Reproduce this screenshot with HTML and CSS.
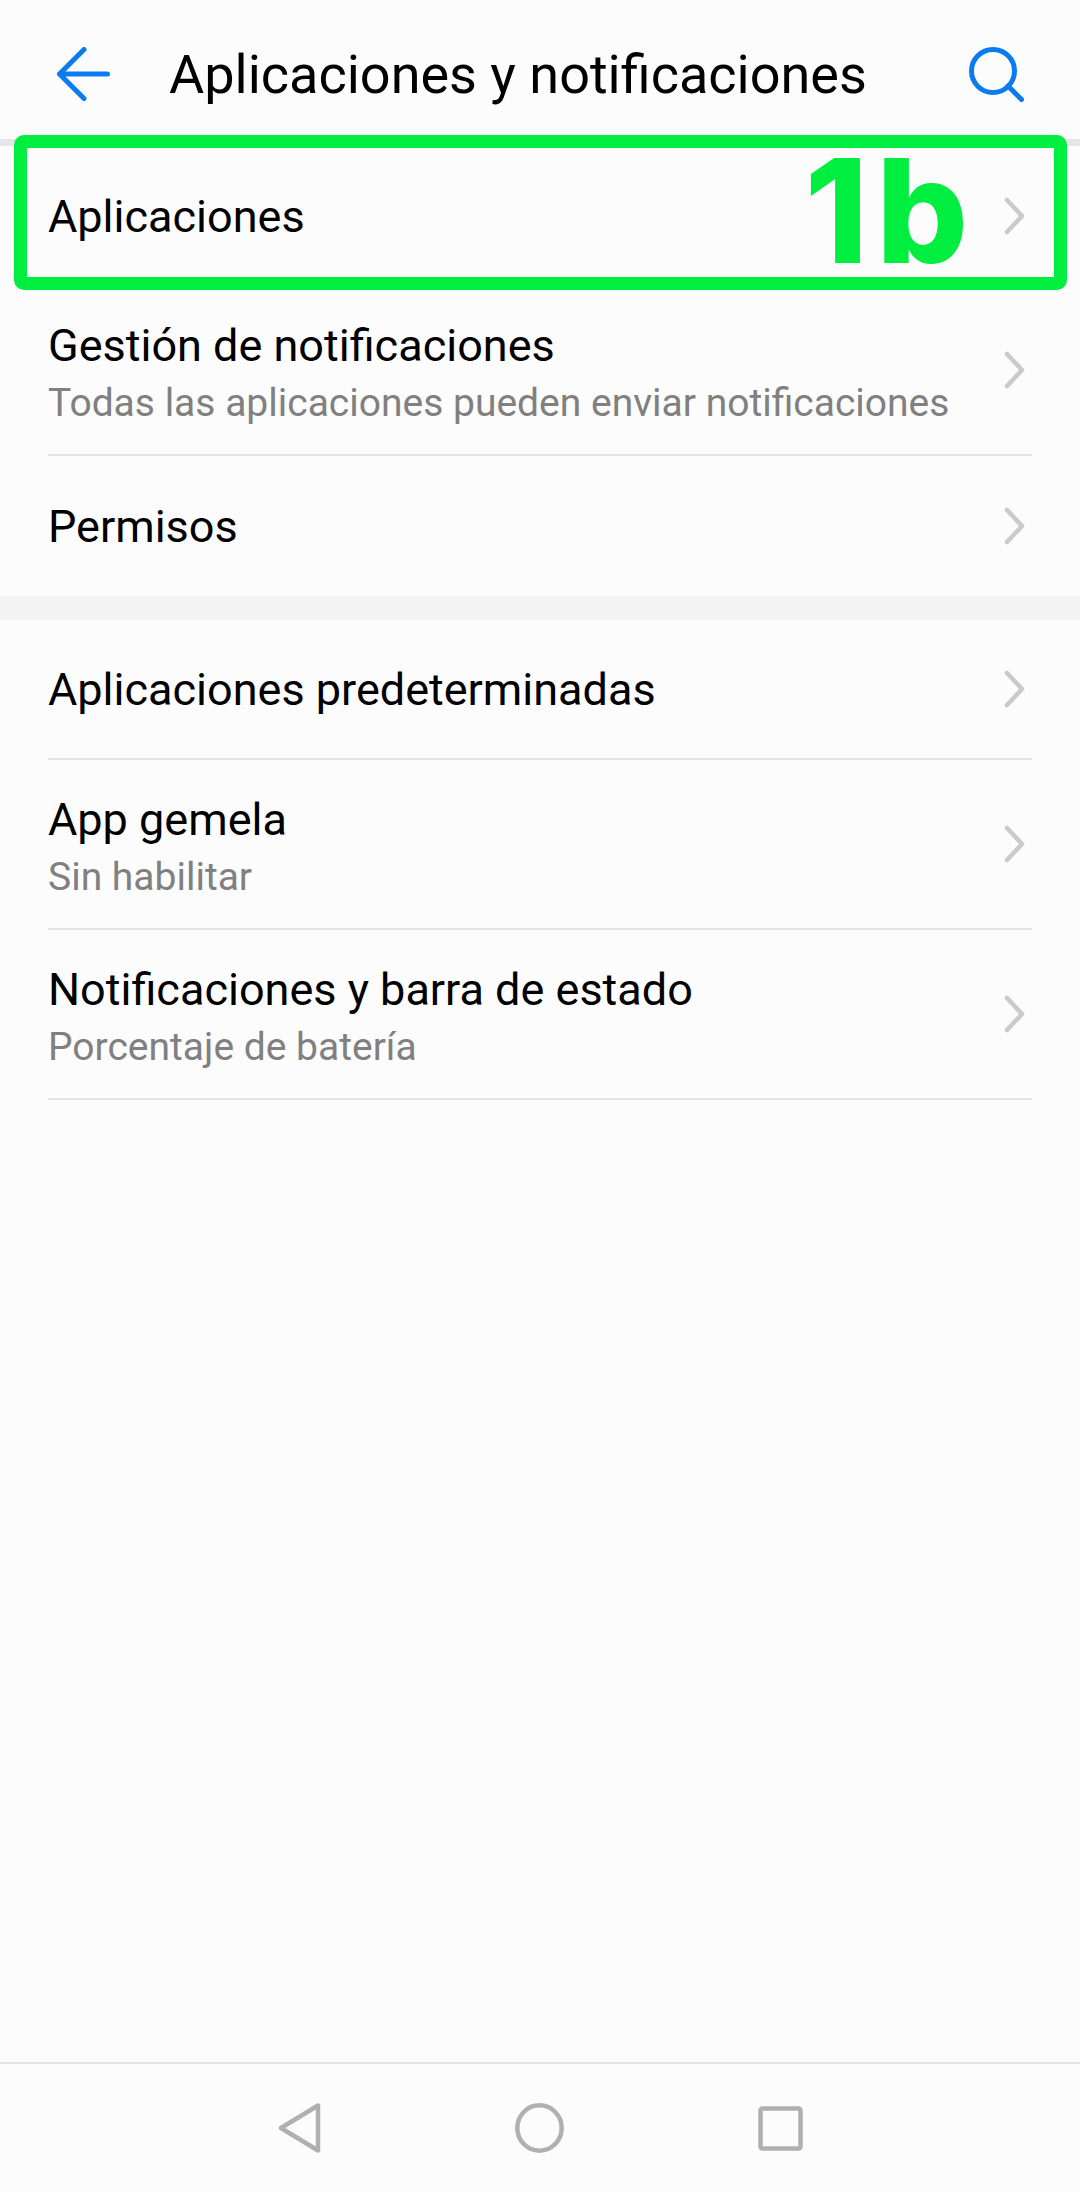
FILE: index.html
```html
<!DOCTYPE html>
<html lang="es">
<head>
  <meta charset="UTF-8">
  <title>Aplicaciones y notificaciones</title>
  <link rel="stylesheet" href="styles.css">
</head>
<body>

  <header class="topbar">
    <svg class="back-icon" width="53" height="54" viewBox="0 0 53 54">
      <path d="M27 2.5 L2.5 27 L27 51.5 M2.5 27 H50.5" />
    </svg>
    <h1>Aplicaciones y notificaciones</h1>
    <svg class="search-icon" width="55" height="55" viewBox="0 0 55 55">
      <circle cx="24" cy="24" r="21.5" />
      <path d="M39 39 L52.5 52.5" />
    </svg>
  </header>

  <main>
    <section class="group">
      <div class="row row-plain">
        <div class="row-text"><span class="row-title">Aplicaciones</span></div>
        <svg class="chevron" viewBox="0 0 22 38"><path d="M4 3 L19 19 L4 35" /></svg>
      </div>
      <div class="row row-double row-lined">
        <div class="row-text">
          <span class="row-title">Gestión de notificaciones</span>
          <span class="row-sub">Todas las aplicaciones pueden enviar notificaciones</span>
        </div>
        <svg class="chevron" viewBox="0 0 22 38"><path d="M4 3 L19 19 L4 35" /></svg>
      </div>
      <div class="row row-plain">
        <div class="row-text"><span class="row-title">Permisos</span></div>
        <svg class="chevron" viewBox="0 0 22 38"><path d="M4 3 L19 19 L4 35" /></svg>
      </div>
    </section>

    <div class="group-gap"></div>

    <section class="group">
      <div class="row row-plain row-lined">
        <div class="row-text"><span class="row-title">Aplicaciones predeterminadas</span></div>
        <svg class="chevron" viewBox="0 0 22 38"><path d="M4 3 L19 19 L4 35" /></svg>
      </div>
      <div class="row row-double row-lined">
        <div class="row-text">
          <span class="row-title">App gemela</span>
          <span class="row-sub">Sin habilitar</span>
        </div>
        <svg class="chevron" viewBox="0 0 22 38"><path d="M4 3 L19 19 L4 35" /></svg>
      </div>
      <div class="row row-double row-lined">
        <div class="row-text">
          <span class="row-title">Notificaciones y barra de estado</span>
          <span class="row-sub">Porcentaje de batería</span>
        </div>
        <svg class="chevron" viewBox="0 0 22 38"><path d="M4 3 L19 19 L4 35" /></svg>
      </div>
    </section>
  </main>

  <nav class="navbar">
    <svg class="nav-icon" width="43" height="50" viewBox="0 0 43 50">
      <path d="M3 25 L40 2.5 V47.5 Z" />
    </svg>
    <svg class="nav-icon" width="49" height="50" viewBox="0 0 49 50">
      <ellipse cx="24.5" cy="25" rx="22.2" ry="22.7" />
    </svg>
    <svg class="nav-icon" width="45" height="45" viewBox="0 0 45 45">
      <rect x="2.5" y="2.5" width="40" height="40" rx="2" />
    </svg>
  </nav>

  <!-- annotation drawn over the screenshot -->
  <div class="callout"></div>
  <span class="callout-label">1b</span>

</body>
</html>
```

FILE: styles.css
```css
html, body {
  margin: 0;
  height: 100%;
}

body {
  position: relative;
  display: flex;
  flex-direction: column;
  font-family: Roboto, sans-serif;
  background-color: #fcfcfc;
  color: #000;
}

.topbar {
  display: flex;
  align-items: center;
  height: 130px;
  padding: 9px 56px 0 57px;
  border-bottom: 7px solid #e6e6e6;
  flex-shrink: 0;
}

.topbar h1 {
  flex: 1;
  margin: 0 0 0 59px;
  font-size: 54px;
  font-weight: 400;
}

.back-icon path,
.search-icon circle,
.search-icon path {
  fill: none;
  stroke: #0a7cf0;
  stroke-width: 5px;
  stroke-linecap: round;
  stroke-linejoin: round;
}

main {
  flex: 1;
}

.row {
  display: flex;
  align-items: center;
  justify-content: space-between;
  margin: 0 48px;
  box-sizing: border-box;
}

.row-plain {
  height: 140px;
}

.row-double {
  height: 170px;
}

.row-double .row-text {
  padding-top: 8px;
}

.row-lined {
  border-bottom: 2px solid #e4e4e4;
}

.row-text {
  display: flex;
  flex-direction: column;
}

.row-title {
  font-size: 45px;
  line-height: 57px;
}

.row-sub {
  font-size: 39px;
  line-height: 58px;
  color: #808080;
}

.chevron {
  width: 22px;
  height: 38px;
  margin-right: 7px;
}

.chevron path {
  fill: none;
  stroke: #cacaca;
  stroke-width: 4.5px;
  stroke-linecap: round;
  stroke-linejoin: round;
}

.group-gap {
  height: 24px;
  background-color: #f4f4f4;
}

.navbar {
  display: flex;
  align-items: center;
  justify-content: center;
  gap: 194px;
  height: 128px;
  border-top: 2px solid #e4e4e4;
  flex-shrink: 0;
}

.nav-icon ellipse,
.nav-icon path,
.nav-icon rect {
  fill: none;
  stroke: #b0b0b0;
  stroke-width: 4.5px;
  stroke-linejoin: round;
}

.callout {
  position: absolute;
  left: 14px;
  top: 135px;
  width: 1053px;
  height: 155px;
  box-sizing: border-box;
  border: 13px solid #00ee40;
  border-radius: 10px;
}

.callout-label {
  position: absolute;
  right: 104px;
  top: 131px;
  font-family: Inter, sans-serif;
  font-size: 144px;
  line-height: 160px;
  font-weight: 800;
  letter-spacing: 8px;
  color: #00ee40;
}
```
